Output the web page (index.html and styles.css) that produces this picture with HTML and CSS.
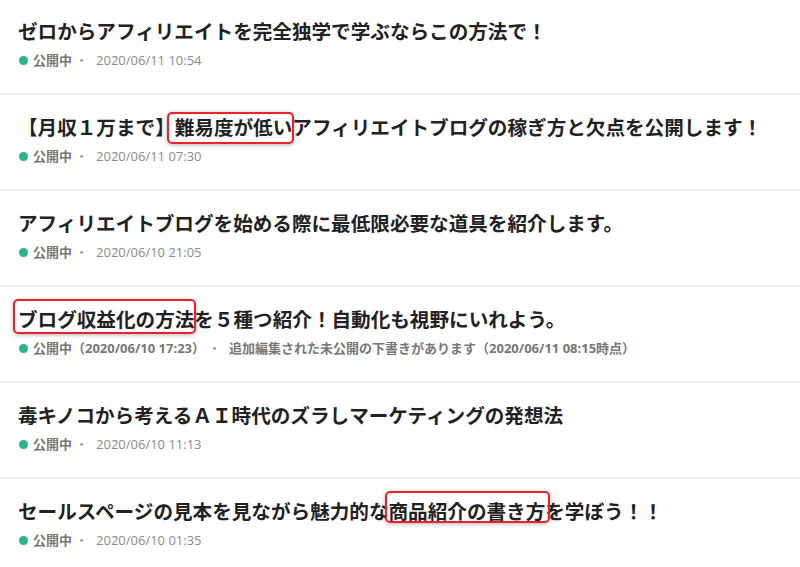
FILE: index.html
```html
<!DOCTYPE html>
<html lang="ja">
<head>
<meta charset="utf-8">
<title>記事一覧</title>
<link rel="stylesheet" href="styles.css">
</head>
<body>
<ul class="post-list">
  <li class="post">
    <h2 class="post-title">ゼロからアフィリエイトを完全独学で学ぶならこの方法で！</h2>
    <div class="post-meta"><span class="status"><span class="dot"></span>公開中</span><span class="sep">・</span><span class="date">2020/06/11 10:54</span></div>
  </li>
  <li class="post">
    <h2 class="post-title">【月収１万まで】<span class="mark mark-a">難易度が低い</span>アフィリエイトブログの稼ぎ方と欠点を公開します！</h2>
    <div class="post-meta"><span class="status"><span class="dot"></span>公開中</span><span class="sep">・</span><span class="date">2020/06/11 07:30</span></div>
  </li>
  <li class="post">
    <h2 class="post-title">アフィリエイトブログを始める際に最低限必要な道具を紹介します。</h2>
    <div class="post-meta"><span class="status"><span class="dot"></span>公開中</span><span class="sep">・</span><span class="date">2020/06/10 21:05</span></div>
  </li>
  <li class="post">
    <h2 class="post-title"><span class="mark mark-b">ブログ収益化の方法</span>を５種つ紹介！自動化も視野にいれよう。</h2>
    <div class="post-meta"><span class="status"><span class="dot"></span>公開中（2020/06/10 17:23）</span><span class="sep">・</span><span class="status">追加編集された未公開の下書きがあります（2020/06/11 08:15時点）</span></div>
  </li>
  <li class="post">
    <h2 class="post-title">毒キノコから考えるＡＩ時代のズラしマーケティングの発想法</h2>
    <div class="post-meta"><span class="status"><span class="dot"></span>公開中</span><span class="sep">・</span><span class="date">2020/06/10 11:13</span></div>
  </li>
  <li class="post">
    <h2 class="post-title">セールスページの見本を見ながら魅力的な<span class="mark mark-c">商品紹介の書き方</span>を学ぼう！！</h2>
    <div class="post-meta"><span class="status"><span class="dot"></span>公開中</span><span class="sep">・</span><span class="date">2020/06/10 01:35</span></div>
  </li>
</ul>
</body>
</html>
```

FILE: styles.css
```css
html, body {
  margin: 0;
  padding: 0;
  background: #ffffff;
}

body {
  font-family: "Open Sans", "Noto Sans CJK JP", sans-serif;
  color: #222222;
  overflow: hidden;
}

.post-list {
  list-style: none;
  margin: -1px 0 0 0;
  padding: 0;
}

.post {
  padding: 21px 18px 24px 18px;
  border-bottom: 2px solid #eeeeee;
}

.post-title {
  margin: 0;
  font-size: 19.6px;
  line-height: 24px;
  font-weight: 700;
  color: #222222;
  white-space: nowrap;
}

.post-meta {
  margin-top: 7px;
  display: flex;
  align-items: center;
  height: 18px;
  font-size: 13px;
  line-height: 18px;
  color: #888888;
  padding-left: 1px;
}

.status {
  display: inline-flex;
  align-items: center;
  font-weight: 700;
  color: #777777;
}

.dot {
  width: 9px;
  height: 9px;
  border-radius: 50%;
  background: #2bb48c;
  margin-right: 5px;
}

.sep {
  margin: 0 8px 0 3px;
  color: #999999;
}

.date {
  font-size: 13px;
  color: #8a8a8a;
}

.mark {
  position: relative;
}

.mark::after {
  content: "";
  position: absolute;
  border: 2px solid #e8222b;
  border-radius: 5px;
  box-shadow: 0 1px 4px rgba(0, 0, 0, 0.3), inset 0 0 3px rgba(0, 0, 0, 0.12);
  pointer-events: none;
}

.mark-a::after {
  left: -8px;
  right: -2px;
  top: -2px;
  bottom: -3px;
}

.mark-b::after {
  left: -5px;
  right: -2px;
  top: -7px;
  bottom: -1px;
}

.mark-c::after {
  left: -4px;
  right: -5px;
  top: -7px;
  bottom: 2px;
}
```
